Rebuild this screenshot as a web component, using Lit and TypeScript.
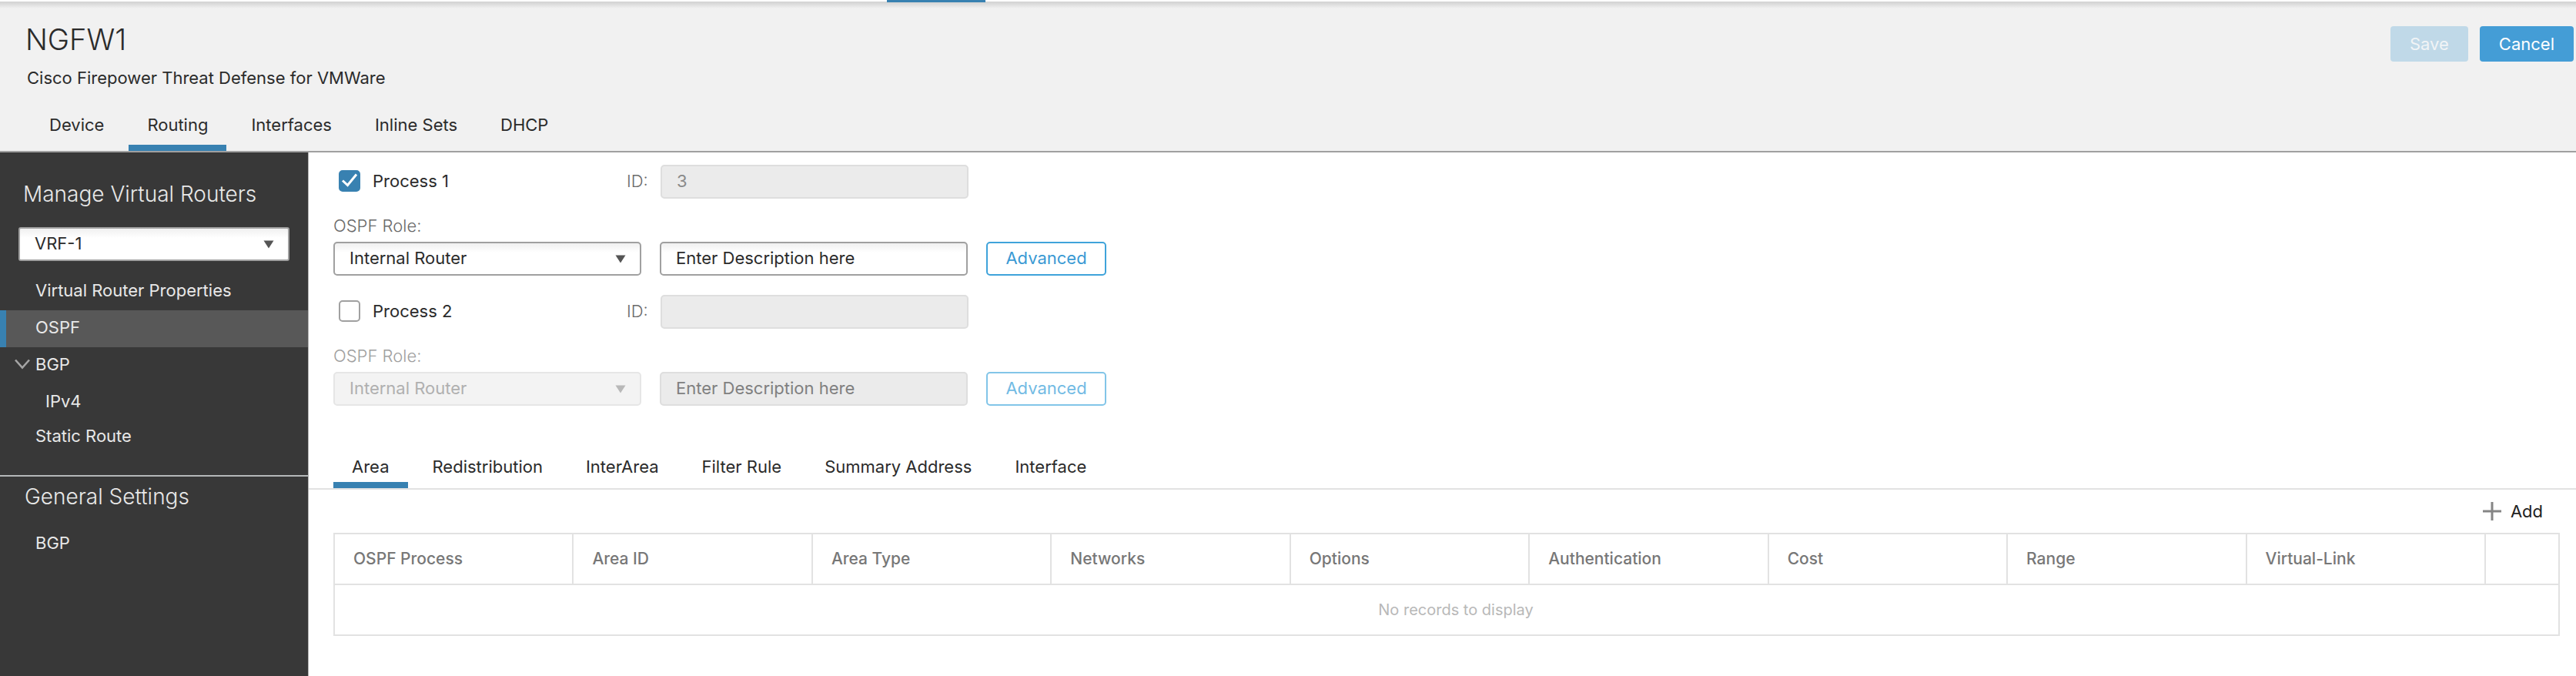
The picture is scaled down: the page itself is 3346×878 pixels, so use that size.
import { LitElement, html, css, svg, nothing } from 'lit';
import { customElement, property, state } from 'lit/decorators.js';
import { classMap } from 'lit/directives/class-map.js';

const caret = html`<svg class="caret" viewBox="0 0 14 11" width="14" height="11" aria-hidden="true">
  <path d="M0.5 0.5 H13.5 L7 10.5 Z" fill="currentColor"></path>
</svg>`;

const controls = css`
  * { box-sizing: border-box; }
  .select {
    display: grid;
    align-items: center;
    color: #555;
  }
  .select select, .select .caret { grid-area: 1 / 1; }
  .caret {
    justify-self: end;
    margin-right: 20px;
    pointer-events: none;
  }
  select, input.text {
    appearance: none;
    width: 100%;
    height: 44px;
    margin: 0;
    padding: 0 19px 2px;
    border: 2px solid #a0a0a0;
    border-radius: 5px;
    background: linear-gradient(#f0f0f0, #fff 12px);
    color: #2b2b2b;
    font: inherit;
    opacity: 1;
  }
`;

@customElement('tab-bar')
class TabBar extends LitElement {
  @property({ attribute: false }) tabs: string[] = [];
  @property() active = '';

  static styles = css`
    :host { display: block; }
    .tabs { display: flex; gap: 8px; }
    .tab {
      padding: 0 24px var(--tab-gap, 12px);
      border-bottom: 8px solid transparent;
      color: #2b2b2b;
      line-height: 28px;
      text-decoration: none;
      white-space: nowrap;
    }
    .active { border-color: #3881b1; }
  `;

  render() {
    return html`<nav class="tabs">
      ${this.tabs.map((t) => html`<a href="#" class=${classMap({ tab: true, active: t === this.active })}
        @click=${(e: Event) => { e.preventDefault(); this.active = t; }}>${t}</a>`)}
    </nav>`;
  }
}

@customElement('router-sidebar')
class RouterSidebar extends LitElement {
  static styles = [controls, css`
    :host {
      display: block;
      background: #383838;
      color: #e8e8e8;
    }
    h2 {
      margin: 0;
      padding-left: 30px;
      font-size: 28px;
      font-weight: 300;
      line-height: 36px;
    }
    .top { padding-top: 36px; }
    .select { margin: 25px 24px 16px; }
    .select select { border-radius: 3px; }
    ul { margin: 0; padding: 0; list-style: none; }
    .item {
      display: flex;
      align-items: center;
      height: 48px;
      padding: 0 0 4px 38px;
      border-left: 8px solid transparent;
      color: inherit;
      text-decoration: none;
    }
    .active { background: #585858; border-color: #3881b1; }
    .child { padding-left: 51px; }
    .parent { gap: 7px; padding-left: 11px; }
    .last { height: 42px; }
    .general {
      margin-top: 28px;
      padding-top: 8px;
      border-top: 2px solid #b4b8b9;
    }
    .general h2 { padding-left: 32px; }
    .general ul { margin-top: 20px; }
  `];

  render() {
    const chevron = svg`<svg viewBox="0 0 20 14" width="20" height="14" aria-hidden="true">
      <path d="M1 1.5 L10 11.5 L19 1.5" fill="none" stroke="#a5a5a5" stroke-width="2.6"></path></svg>`;
    return html`
      <section class="top">
        <h2>Manage Virtual Routers</h2>
        <div class="select">
          <select aria-label="Virtual router"><option>VRF-1</option></select>${caret}
        </div>
        <ul>
          <li><a class="item" href="#">Virtual Router Properties</a></li>
          <li><a class="item active" href="#">OSPF</a></li>
          <li><a class="item parent" href="#">${chevron}BGP</a></li>
          <li><a class="item child" href="#">IPv4</a></li>
          <li><a class="item last" href="#">Static Route</a></li>
        </ul>
      </section>
      <section class="general">
        <h2>General Settings</h2>
        <ul><li><a class="item" href="#">BGP</a></li></ul>
      </section>`;
  }
}

@customElement('ospf-process')
class OspfProcess extends LitElement {
  @property({ type: Number }) number = 1;
  @property({ type: Boolean, reflect: true }) enabled = false;
  @property() processId = '';

  static styles = [controls, css`
    :host { display: block; padding-bottom: 25px; }
    .head { display: flex; align-items: center; padding-left: 7px; }
    .enable {
      display: flex;
      align-items: center;
      gap: 16px;
      width: 374px;
      color: #2b2b2b;
    }
    .id-label { width: 44px; color: #6a6a6a; font-weight: 300; }
    .enable, .id-label { padding-bottom: 2px; }
    .box { display: grid; }
    .box input, .box svg { grid-area: 1 / 1; }
    .box svg { pointer-events: none; }
    input.check {
      appearance: none;
      width: 28px;
      height: 28px;
      margin: 0;
      border: 2px solid #a0a0a0;
      border-radius: 5px;
      background: #fff;
    }
    input.check:checked { background: #3881b1; border-color: #3881b1; }
    input.id { width: 400px; color: #8a8a8a; }
    input.text:disabled { background: #ebebeb; border-color: #dedede; }
    .role-label {
      display: block;
      width: max-content;
      margin: 21px 0 7px;
      color: #6a6a6a;
      font-weight: 300;
      line-height: 28px;
    }
    .fields {
      display: grid;
      grid-template-columns: 400px 400px 156px;
      gap: 24px;
    }
    .fields input::placeholder { color: #2b2b2b; opacity: 1; }
    button {
      height: 44px;
      padding: 0 0 2px;
      border: 2px solid #3fa3da;
      border-radius: 5px;
      background: #fff;
      color: #3a9ad4;
      font: inherit;
    }
    :host(:not([enabled])) .role-label { color: #a0a0a0; }
    :host(:not([enabled])) select {
      background: #f3f3f3;
      border-color: #e6e6e6;
      color: #b0b0b0;
    }
    :host(:not([enabled])) .select { color: #b8b8b8; }
    :host(:not([enabled])) .fields input::placeholder { color: #808080; }
    :host(:not([enabled])) button { border-color: #82c5e8; color: #72bbe4; }
  `];

  render() {
    const off = !this.enabled;
    return html`
      <div class="head">
        <label class="enable">
          <span class="box">
            <input class="check" type="checkbox" .checked=${this.enabled}
              @change=${(e: Event) => { this.enabled = (e.target as HTMLInputElement).checked; }}>
            ${this.enabled ? html`<svg viewBox="0 0 28 28" width="28" height="28" aria-hidden="true">
              <path d="M5 13.5 L11.5 19.5 L23 5.5" fill="none" stroke="#fff" stroke-width="3"></path></svg>` : nothing}
          </span>
          Process ${this.number}
        </label>
        <label class="id-label" for="pid">ID:</label>
        <input id="pid" class="text id" type="text" disabled .value=${this.processId}>
      </div>
      <label class="role-label" for="role">OSPF Role:</label>
      <div class="fields">
        <div class="select">
          <select id="role" ?disabled=${off}><option>Internal Router</option></select>${caret}
        </div>
        <input class="text" type="text" aria-label="Description" placeholder="Enter Description here" ?disabled=${off}>
        <button type="button" ?disabled=${off}>Advanced</button>
      </div>`;
  }
}

@customElement('area-table')
class AreaTable extends LitElement {
  @state() private columns = ['OSPF Process', 'Area ID', 'Area Type', 'Networks', 'Options',
    'Authentication', 'Cost', 'Range', 'Virtual-Link'];

  static styles = css`
    :host { display: block; padding: 8px 21px 0 32px; }
    .toolbar { display: flex; justify-content: flex-end; padding-right: 22px; }
    .add {
      display: flex;
      align-items: center;
      gap: 12px;
      height: 40px;
      padding: 0;
      border: 0;
      background: none;
      color: #222;
      font: inherit;
    }
    table {
      width: 100%;
      margin-top: 8px;
      border-collapse: collapse;
      table-layout: fixed;
      font-size: 20px;
    }
    th, td {
      height: 66px;
      box-sizing: border-box;
      padding: 0 0 0 24px;
      border: 2px solid #e2e2e2;
    }
    th { color: #777; font-size: 21px; font-weight: 500; text-align: left; }
    .actions { width: 96px; }
    td { color: #b8b8b8; text-align: center; }
  `;

  render() {
    return html`
      <div class="toolbar">
        <button class="add" type="button">
          <svg viewBox="0 0 24 24" width="24" height="24" aria-hidden="true">
            <path d="M12 0 V24 M0 12 H24" stroke="#858585" stroke-width="3" fill="none"></path></svg>Add
        </button>
      </div>
      <table>
        <thead><tr>
          ${this.columns.map((c) => html`<th scope="col">${c}</th>`)}
          <th class="actions" aria-label="Actions"></th>
        </tr></thead>
        <tbody><tr><td colspan=${this.columns.length + 1}>No records to display</td></tr></tbody>
      </table>`;
  }
}

@customElement('app-root')
class AppRoot extends LitElement {
  static styles = css`
    * { box-sizing: border-box; }
    :host {
      display: flex;
      flex-direction: column;
      min-height: 100vh;
      background: #fff;
      color: #2b2b2b;
      font: 400 22px/28px Inter, Roboto, sans-serif;
    }
    .strip { height: 3px; padding-left: 1152px; background: linear-gradient(#fff 2px, #d4d4d4 2px); }
    .marker { width: 128px; height: 3px; background: #3881b1; }
    header {
      padding-top: 26px;
      border-bottom: 2px solid #a0a0a0;
      background: linear-gradient(#d4d4d4, #f1f1f1 8px);
    }
    .title { display: flex; justify-content: space-between; padding: 0 3px 33px 33px; }
    h1 { margin: 0; font-size: 38px; font-weight: 300; line-height: 44px; }
    p { margin: 14px 0 0 2px; }
    .actions { display: flex; gap: 15px; padding-top: 5px; }
    .actions button {
      height: 46px;
      padding: 0 25px;
      border: 0;
      border-radius: 4px;
      background: #449dd6;
      color: #fff;
      font: inherit;
    }
    .actions button:disabled { background: #c0d9e8; color: #f1f4f6; }
    .main-tabs { padding-left: 40px; }
    .body { display: flex; flex: 1; }
    router-sidebar { flex: none; width: 400px; }
    main { flex: 1; min-width: 0; border-left: 1px solid #b0b0b0; }
    .processes { padding: 16px 32px 0; }
    .sub-tabs {
      --tab-gap: 6px;
      margin-top: 40px;
      padding-left: 32px;
      border-bottom: 2px solid #e2e2e2;
    }
  `;

  render() {
    return html`
      <div class="strip"><div class="marker"></div></div>
      <header>
        <div class="title">
          <div>
            <h1>NGFW1</h1>
            <p>Cisco Firepower Threat Defense for VMWare</p>
          </div>
          <div class="actions">
            <button type="button" disabled>Save</button>
            <button type="button">Cancel</button>
          </div>
        </div>
        <tab-bar class="main-tabs" active="Routing"
          .tabs=${['Device', 'Routing', 'Interfaces', 'Inline Sets', 'DHCP']}></tab-bar>
      </header>
      <div class="body">
        <router-sidebar></router-sidebar>
        <main>
          <div class="processes">
            <ospf-process number="1" enabled .processId=${'3'}></ospf-process>
            <ospf-process number="2"></ospf-process>
          </div>
          <tab-bar class="sub-tabs" active="Area"
            .tabs=${['Area', 'Redistribution', 'InterArea', 'Filter Rule', 'Summary Address', 'Interface']}></tab-bar>
          <area-table></area-table>
        </main>
      </div>`;
  }
}
